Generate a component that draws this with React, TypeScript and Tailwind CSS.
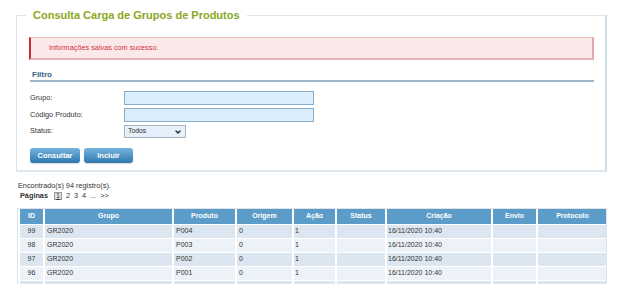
import { ChevronDown } from "lucide-react";

const rows = [
  { id: "99", grupo: "GR2020", produto: "P004", origem: "0", acao: "1", criacao: "16/11/2020 10:40" },
  { id: "98", grupo: "GR2020", produto: "P003", origem: "0", acao: "1", criacao: "16/11/2020 10:40" },
  { id: "97", grupo: "GR2020", produto: "P002", origem: "0", acao: "1", criacao: "16/11/2020 10:40" },
  { id: "96", grupo: "GR2020", produto: "P001", origem: "0", acao: "1", criacao: "16/11/2020 10:40" },
  // next row is only peeking in at the bottom edge
  { id: "", grupo: "", produto: "", origem: "", acao: "", criacao: "" },
];

const cols = [
  { label: "ID", w: "w-[25px]" },
  { label: "Grupo", w: "w-[129px]" },
  { label: "Produto", w: "w-[63px]" },
  { label: "Origem", w: "w-[57px]" },
  { label: "Ação", w: "w-[43px]" },
  { label: "Status", w: "w-[50px]" },
  { label: "Criação", w: "w-[106px]" },
  { label: "Envio", w: "w-[45px]" },
  { label: "Protocolo", w: "w-[71px]" },
];

export default function App() {
  return (
    <div className="w-[621px] h-[299px] overflow-hidden bg-white font-['Liberation_Sans',Arial,sans-serif] text-[#333]">
      {/* Filter panel */}
      <div className="pl-4 pt-[8px]">
        <fieldset className="w-[591px] border border-[#dae4ed] border-r-2 border-r-[#ccdae6] border-b-2 border-b-[#dfe8f0] pb-[7px]">
          <legend className="ml-[9px] px-[7px] text-[11px] leading-[14px] font-bold text-[#8aa822]">
            Consulta Carga de Grupos de Produtos
          </legend>

          <div className="pl-3">
            <div className="mt-[15px] w-[565px] h-[23px] flex items-center bg-[#fbe8e9] border border-[#eab9bd] border-r-2 border-b-2 border-r-[#e2a9ae] border-b-[#e7b4b8] border-l-2 border-l-[#c92a35] pl-[18px]">
              <span className="text-[7.3px] text-[#d2313b]">Informações salvas com sucesso.</span>
            </div>

            <div className="mt-[10px] w-[564px] ml-[1px] border-b-2 border-[#9db5c7] pl-[2px] h-[12px]">
              <span className="block text-[8px] leading-[10px] font-bold text-[#36607f]">Filtro</span>
            </div>

            <div className="mt-[9px] ml-[1px] flex flex-col gap-[3px] text-[7.3px] text-[#333]">
              <div className="flex items-center">
                <span className="w-[94px]">Grupo:</span>
                <div className="w-[190px] h-[14px] border border-[#86adc9] bg-[#dcedfb]" />
              </div>
              <div className="flex items-center">
                <span className="w-[94px]">Código Produto:</span>
                <div className="w-[190px] h-[14px] border border-[#86adc9] bg-[#dcedfb]" />
              </div>
              <div className="flex items-center">
                <span className="w-[94px]">Status:</span>
                <div className="w-[62px] h-[13px] border border-[#a9b3bc] bg-[#e6f0fa] flex items-center justify-between pl-[3px] pr-[3px]">
                  <span className="text-[6.8px]">Todos</span>
                  <ChevronDown size={8} strokeWidth={4} className="text-[#222]" />
                </div>
              </div>
            </div>

            <div className="mt-[10px] ml-[1px] flex gap-[4px]">
              <button className="w-[50px] h-[15px] rounded-[3px] bg-gradient-to-b from-[#74b5dd] to-[#2d78ae] text-white text-[7.5px] font-bold shadow-[0_1px_1px_rgba(0,0,0,0.15)]">
                Consultar
              </button>
              <button className="w-[49px] h-[15px] rounded-[3px] bg-gradient-to-b from-[#74b5dd] to-[#2d78ae] text-white text-[7.5px] font-bold shadow-[0_1px_1px_rgba(0,0,0,0.15)]">
                Incluir
              </button>
            </div>
          </div>
        </fieldset>
      </div>

      {/* Results */}
      <div className="pl-[17px] mt-[9px]">
        <div className="ml-[1px] text-[7.3px] leading-[10px]">Encontrado(s) 94 registro(s).</div>
        <div className="ml-[3px] flex items-center gap-[4px] text-[7.3px] leading-[10px]">
          <span className="font-bold mr-[2px]">Páginas</span>
          <span className="inline-flex items-center justify-center w-[8px] h-[8px] border border-[#9a9a9a] bg-[#dedede] underline text-[6.5px] leading-none">
            1
          </span>
          <span>2</span>
          <span>3</span>
          <span>4</span>
          <span>...</span>
          <span>&gt;&gt;</span>
        </div>

        <div className="mt-[7px] w-[590px] h-[76px] overflow-hidden border border-[#dde3e8] border-b-0">
          <table className="table-fixed w-full border-collapse text-[7px]">
            <colgroup>
              {cols.map((c) => (
                <col key={c.label} className={c.w} />
              ))}
            </colgroup>
            <thead>
              <tr className="h-[15px] bg-[#5b9cc8]">
                {cols.map((c) => (
                  <th key={c.label} className="border-x-2 border-white text-white font-bold text-center">
                    {c.label}
                  </th>
                ))}
              </tr>
            </thead>
            <tbody>
              {rows.map((r, i) => (
                <tr key={i} className={i % 2 === 0 ? "h-[14px] bg-[#dbe6f0]" : "h-[14px] bg-[#edf2f8]"}>
                  <td className="border-x-2 border-t border-white text-center">{r.id}</td>
                  <td className="border-x-2 border-t border-white pl-[2px]">{r.grupo}</td>
                  <td className="border-x-2 border-t border-white pl-[2px]">{r.produto}</td>
                  <td className="border-x-2 border-t border-white pl-[2px]">{r.origem}</td>
                  <td className="border-x-2 border-t border-white pl-[1px]">{r.acao}</td>
                  <td className="border-x-2 border-t border-white"></td>
                  <td className="border-x-2 border-t border-white pl-[1px]">{r.criacao}</td>
                  <td className="border-x-2 border-t border-white"></td>
                  <td className="border-x-2 border-t border-white"></td>
                </tr>
              ))}
            </tbody>
          </table>
        </div>
      </div>
    </div>
  );
}
